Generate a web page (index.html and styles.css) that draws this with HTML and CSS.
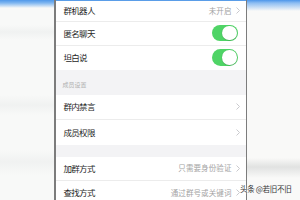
FILE: index.html
```html
<!DOCTYPE html>
<html>
<head>
<meta charset="utf-8">
<link rel="stylesheet" href="styles.css">
</head>
<body>
<div class="screen">
  <div class="side side-left"></div>
  <div class="edge"></div>
  <div class="main">
    <div class="row row-first">
      <span class="label">群机器人</span>
      <span class="value">未开启</span>
      <svg class="chev" width="4" height="7" viewBox="0 0 4 7"><polyline points="0.5,0.5 3.5,3.5 0.5,6.5" fill="none" stroke="#c4c4c8" stroke-width="0.9"/></svg>
    </div>
    <div class="row">
      <span class="label">匿名聊天</span>
      <span class="toggle"><span class="knob"></span></span>
    </div>
    <div class="row row-last">
      <span class="label">坦白说</span>
      <span class="toggle"><span class="knob"></span></span>
    </div>
    <div class="section">成员设置</div>
    <div class="row row-tall">
      <span class="label">群内禁言</span>
      <span class="value"></span>
      <svg class="chev" width="4" height="7" viewBox="0 0 4 7"><polyline points="0.5,0.5 3.5,3.5 0.5,6.5" fill="none" stroke="#c4c4c8" stroke-width="0.9"/></svg>
    </div>
    <div class="row row-tall row-last">
      <span class="label">成员权限</span>
      <span class="value"></span>
      <svg class="chev" width="4" height="7" viewBox="0 0 4 7"><polyline points="0.5,0.5 3.5,3.5 0.5,6.5" fill="none" stroke="#c4c4c8" stroke-width="0.9"/></svg>
    </div>
    <div class="gap"></div>
    <div class="row">
      <span class="label">加群方式</span>
      <span class="value">只需要身份验证</span>
      <svg class="chev" width="4" height="7" viewBox="0 0 4 7"><polyline points="0.5,0.5 3.5,3.5 0.5,6.5" fill="none" stroke="#c4c4c8" stroke-width="0.9"/></svg>
    </div>
    <div class="row row-last">
      <span class="label">查找方式</span>
      <span class="value">通过群号或关键词</span>
      <svg class="chev" width="4" height="7" viewBox="0 0 4 7"><polyline points="0.5,0.5 3.5,3.5 0.5,6.5" fill="none" stroke="#c4c4c8" stroke-width="0.9"/></svg>
    </div>
  </div>
  <div class="edge"></div>
  <div class="side side-right"></div>
  <div class="watermark">头条 @若旧不旧</div>
</div>
</body>
</html>
```

FILE: styles.css
```css
html, body {
  margin: 0;
  padding: 0;
  width: 300px;
  height: 200px;
  overflow: hidden;
  background: #f7f8f7;
  font-family: "Noto Sans CJK SC", "Noto Sans", sans-serif;
}

.screen {
  position: relative;
  display: flex;
  width: 300px;
  height: 200px;
  overflow: hidden;
}

.side {
  flex: 0 0 auto;
  height: 200px;
}

.side-left {
  width: 54px;
  background:
    linear-gradient(180deg, #4f98ea 0px, #7fb6f0 3px, rgba(240,246,252,0) 8px),
    linear-gradient(180deg, rgba(0,0,0,0) 25px, rgba(225,228,228,0.35) 32px, rgba(0,0,0,0) 40px),
    linear-gradient(180deg, rgba(0,0,0,0) 95px, rgba(225,228,228,0.35) 105px, rgba(0,0,0,0) 115px),
    linear-gradient(180deg, rgba(0,0,0,0) 150px, rgba(225,228,228,0.35) 162px, rgba(0,0,0,0) 175px),
    #f8f9f8;
}

.side-right {
  width: 53px;
  background:
    linear-gradient(180deg, #4d96ea 0px, #8dbdf2 3px, rgba(244,249,253,0) 11px),
    linear-gradient(180deg, rgba(0,0,0,0) 158px, rgba(205,207,207,0.55) 167px, rgba(0,0,0,0) 178px),
    #f9f9f8;
}

.edge {
  flex: 0 0 auto;
  width: 1.5px;
  height: 200px;
  background: #7c7c7c;
}

.main {
  flex: 0 0 auto;
  width: 190px;
  height: 200px;
  display: flex;
  flex-direction: column;
  background: #f3f3f5;
  border-top: 1.5px solid #5a9de8;
  box-sizing: border-box;
}

.row {
  flex: 0 0 auto;
  box-sizing: border-box;
  height: 24px;
  display: flex;
  align-items: center;
  padding: 0 6px 0 8px;
  background: #ffffff;
  border-bottom: 1px solid #ececec;
}

.row-first {
  height: 20.5px;
  padding-bottom: 1px;
}

.row-tall {
  height: 25px;
}

.row-last {
  border-bottom: none;
}

.label {
  flex: 1 1 auto;
  font-size: 8.5px;
  letter-spacing: -0.7px;
  color: #262626;
  line-height: 1;
}

.value {
  font-size: 7.5px;
  letter-spacing: 0.1px;
  color: #a3a3a3;
  line-height: 1;
  margin-right: 4px;
}

.chev {
  display: block;
  flex: 0 0 auto;
}

.toggle {
  flex: 0 0 auto;
  box-sizing: border-box;
  width: 26px;
  height: 16.5px;
  margin-right: 2px;
  border-radius: 9px;
  background: #4fd466;
  display: flex;
  align-items: center;
  justify-content: flex-end;
  padding: 1px;
}

.knob {
  display: block;
  width: 14.5px;
  height: 14.5px;
  border-radius: 50%;
  background: #ffffff;
  box-shadow: 0 0.5px 1px rgba(0,0,0,0.25);
}

.section {
  flex: 0 0 auto;
  box-sizing: border-box;
  height: 25px;
  display: flex;
  align-items: flex-end;
  padding: 0 0 7px 7px;
  font-size: 6px;
  color: #b0b0b0;
  line-height: 1;
  background: #f3f3f5;
}

.gap {
  flex: 0 0 auto;
  height: 12px;
  background: #f3f3f5;
}

.watermark {
  position: absolute;
  left: 240px;
  top: 185px;
  font-size: 7.5px;
  line-height: 1;
  color: #333333;
  letter-spacing: -0.3px;
  white-space: nowrap;
  text-shadow: 0 0 1px #fff, 0 0 1px #fff, 0 0 2px #fff;
}
```
